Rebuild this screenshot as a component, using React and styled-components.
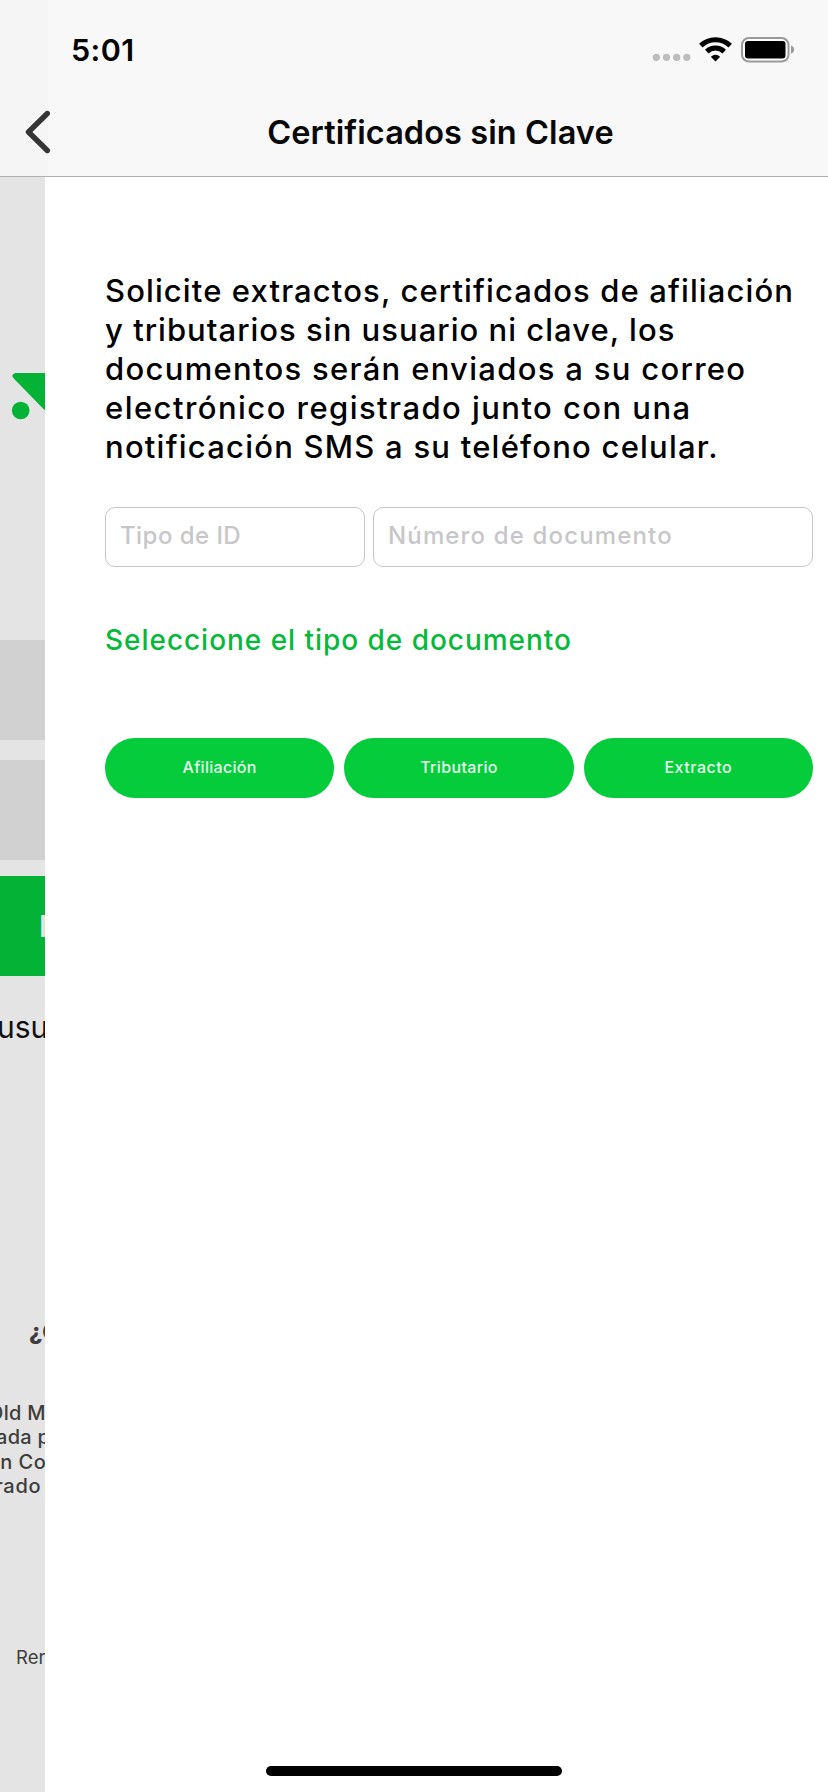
import React from "react";
import styled, { createGlobalStyle } from "styled-components";

const GlobalStyle = createGlobalStyle`
  * { box-sizing: border-box; }
  body { margin: 0; background: #fff; font-family: Inter, "Liberation Sans", sans-serif; }
`;

const Screen = styled.div`
  position: relative;
  width: 828px;
  height: 1792px;
  display: flex;
  flex-direction: column;
  overflow: hidden;
  background: #fff;
`;

const Header = styled.header`
  height: 177px;
  flex: none;
  background: linear-gradient(to right, #f5f5f5 0 48px, #f8f8f8 48px);
  border-bottom: 1px solid #b0b0b0;
`;

const StatusBar = styled.div`
  height: 88px;
  padding: 30px 34px 0 71px;
  display: flex;
  justify-content: space-between;
`;

const Clock = styled.span`
  font-size: 30.5px;
  font-weight: 600;
  line-height: 40px;
  letter-spacing: ${(p) => p.$track}px;
  color: #000;
`;

const NavBar = styled.div`
  height: 88px;
  display: grid;
  grid-template-columns: 74px 1fr 21px;
`;

const BackButton = styled.button`
  border: 0;
  padding: 0;
  background: none;
  display: flex;
`;

const Title = styled.h1`
  margin: 0;
  font-size: 32.5px;
  font-weight: 600;
  line-height: 89px;
  text-align: center;
  letter-spacing: ${(p) => p.$track}px;
  white-space: nowrap;
  color: #080808;
`;

const Body = styled.div`
  flex: 1;
  display: flex;
`;

const PreviousScreen = styled.aside`
  width: 45px;
  flex: none;
  overflow: hidden;
  background: #e4e4e4;
  display: flex;
  flex-direction: column;
`;

const Logo = styled.svg`
  flex: none;
  margin-top: 191px;
`;

const Block = styled.div`
  flex: none;
  height: 100px;
  margin-top: ${(p) => p.$gap}px;
  background: ${(p) => (p.$green ? "#04b335" : "#d1d1d1")};
  color: #e4e4e4;
  font-size: 30px;
  font-weight: 600;
  line-height: 100px;
  padding-left: 39px;
`;

const Clipped = styled.div`
  flex: none;
  height: ${(p) => p.$line}px;
  line-height: ${(p) => p.$line}px;
  margin-top: ${(p) => p.$gap || 0}px;
  margin-left: ${(p) => p.$shift}px;
  font-size: ${(p) => p.$size}px;
  font-weight: ${(p) => p.$weight || 500};
  color: ${(p) => p.$color || "#3d3d3d"};
  letter-spacing: ${(p) => p.$track || 0}px;
  white-space: nowrap;
`;

const Main = styled.main`
  flex: 1;
  padding: 94px 15px 0 60px;
`;

const Intro = styled.p`
  margin: 0;
  font-size: 31px;
  font-weight: 500;
  line-height: 39px;
  color: #000;
`;

const Line = styled.span`
  display: block;
  white-space: nowrap;
  letter-spacing: ${(p) => p.$track}px;
`;

const Fields = styled.div`
  display: grid;
  grid-template-columns: 260px 440px;
  gap: 8px;
  margin-top: 41px;
`;

const Field = styled.div`
  height: 60px;
  border: 1px solid #c6c6c6;
  border-radius: 10px;
  padding-left: 14px;
  font-size: 24px;
  font-weight: 500;
  line-height: 55px;
  letter-spacing: ${(p) => p.$track}px;
  color: #c7c7c9;
  white-space: nowrap;
`;

const Prompt = styled.h2`
  margin: 53px 0 0;
  font-size: 28px;
  font-weight: 500;
  line-height: 40px;
  letter-spacing: ${(p) => p.$track}px;
  color: #06b93a;
`;

const Actions = styled.div`
  display: grid;
  grid-template-columns: repeat(3, 1fr);
  gap: 10px;
  margin-top: 78px;
`;

const Pill = styled.button`
  height: 60px;
  border: 0;
  padding: 0 0 2px;
  border-radius: 30px;
  background: #04cc3b;
  color: #e6ffec;
  font-family: inherit;
  font-size: 16px;
  font-weight: 500;
  line-height: 58px;
  letter-spacing: ${(p) => p.$track}px;
`;

const HomeIndicator = styled.div`
  position: absolute;
  left: 266px;
  bottom: 16px;
  width: 296px;
  height: 10px;
  border-radius: 5px;
  background: #000;
`;

const StatusIcons = () => (
  <svg width="144" height="34" viewBox="650 30 144 34">
    <g fill="#bdbdbd">
      <circle cx="656.3" cy="57.3" r="3.6" />
      <circle cx="666.5" cy="57.3" r="3.6" />
      <circle cx="676.7" cy="57.3" r="3.6" />
      <circle cx="686.8" cy="57.3" r="3.6" />
    </g>
    <g fill="none" stroke="#000" strokeWidth="5">
      <path d="M700.8 45.6A21.3 21.3 0 0 1 730.2 45.6" />
      <path d="M706.8 51.6A12.6 12.6 0 0 1 724.2 51.6" />
    </g>
    <path d="M710.8 56.8Q715.5 52.7 720.2 56.8L715.5 61.4Z" fill="#000" />
    <rect x="742" y="38" width="46.5" height="23.5" rx="7" fill="#fff" stroke="#999" strokeWidth="2" />
    <rect x="745" y="41" width="40.5" height="17.5" rx="3" fill="#000" />
    <path d="M791 45.5Q794 46.5 794 49.6Q794 52.8 791 53.8Z" fill="#999" />
  </svg>
);

const intro = [
  ["Solicite extractos, certificados de afiliación", 1.12],
  ["y tributarios sin usuario ni clave, los", 1.02],
  ["documentos serán enviados a su correo", 1.3],
  ["electrónico registrado junto con una", 1.45],
  ["notificación SMS a su teléfono celular.", 1.23],
];

export default function App() {
  return (
    <Screen>
      <GlobalStyle />
      <Header>
        <StatusBar>
          <Clock $track={0.4}>5:01</Clock>
          <StatusIcons />
        </StatusBar>
        <NavBar>
          <BackButton aria-label="Atrás">
            <svg width="74" height="88" viewBox="0 88 74 88">
              <path d="M47.3 113.5L28.5 132L47.3 150.5" fill="none" stroke="#353536" strokeWidth="5.4" strokeLinecap="round" strokeLinejoin="round" />
            </svg>
          </BackButton>
          <Title $track={0.08}>Certificados sin Clave</Title>
        </NavBar>
      </Header>
      <Body>
        <PreviousScreen>
          <Logo width="45" height="60" viewBox="0 368 45 60">
            <path d="M45 373H15.5Q10 374.5 14 378.8L45 410.5Z" fill="#04b335" />
            <circle cx="20.7" cy="410.5" r="8.8" fill="#04b335" />
          </Logo>
          <Block $gap={212} />
          <Block $gap={20} />
          <Block $gap={16} $green>I</Block>
          <Clipped $gap={31} $line={40} $size={30} $weight={400} $shift={-3} $color="#111">usuario</Clipped>
          <Clipped $gap={265} $line={40} $size={23} $weight={800} $shift={29}>¿Olvidó</Clipped>
          <Clipped $gap={49} $line={24.3} $size={20} $shift={-12} $track={0.3}>Old Mutual</Clipped>
          <Clipped $line={24.3} $size={20} $shift={-4} $track={0.3}>ada por</Clipped>
          <Clipped $line={24.3} $size={20} $shift={-12} $track={0.5}>en Colombia</Clipped>
          <Clipped $line={24.3} $size={20} $shift={-5} $track={0.7}>rado</Clipped>
          <Clipped $gap={139} $line={40} $size={18.5} $weight={400} $shift={16}>Rendimientos</Clipped>
        </PreviousScreen>
        <Main>
          <Intro>
            {intro.map(([text, track]) => (
              <Line key={text} $track={track}>{text}</Line>
            ))}
          </Intro>
          <Fields>
            <Field $track={0.45}>Tipo de ID</Field>
            <Field $track={1.15}>Número de documento</Field>
          </Fields>
          <Prompt $track={0.96}>Seleccione el tipo de documento</Prompt>
          <Actions>
            <Pill $track={0.3}>Afiliación</Pill>
            <Pill $track={0.35}>Tributario</Pill>
            <Pill $track={0.5}>Extracto</Pill>
          </Actions>
        </Main>
      </Body>
      <HomeIndicator />
    </Screen>
  );
}
